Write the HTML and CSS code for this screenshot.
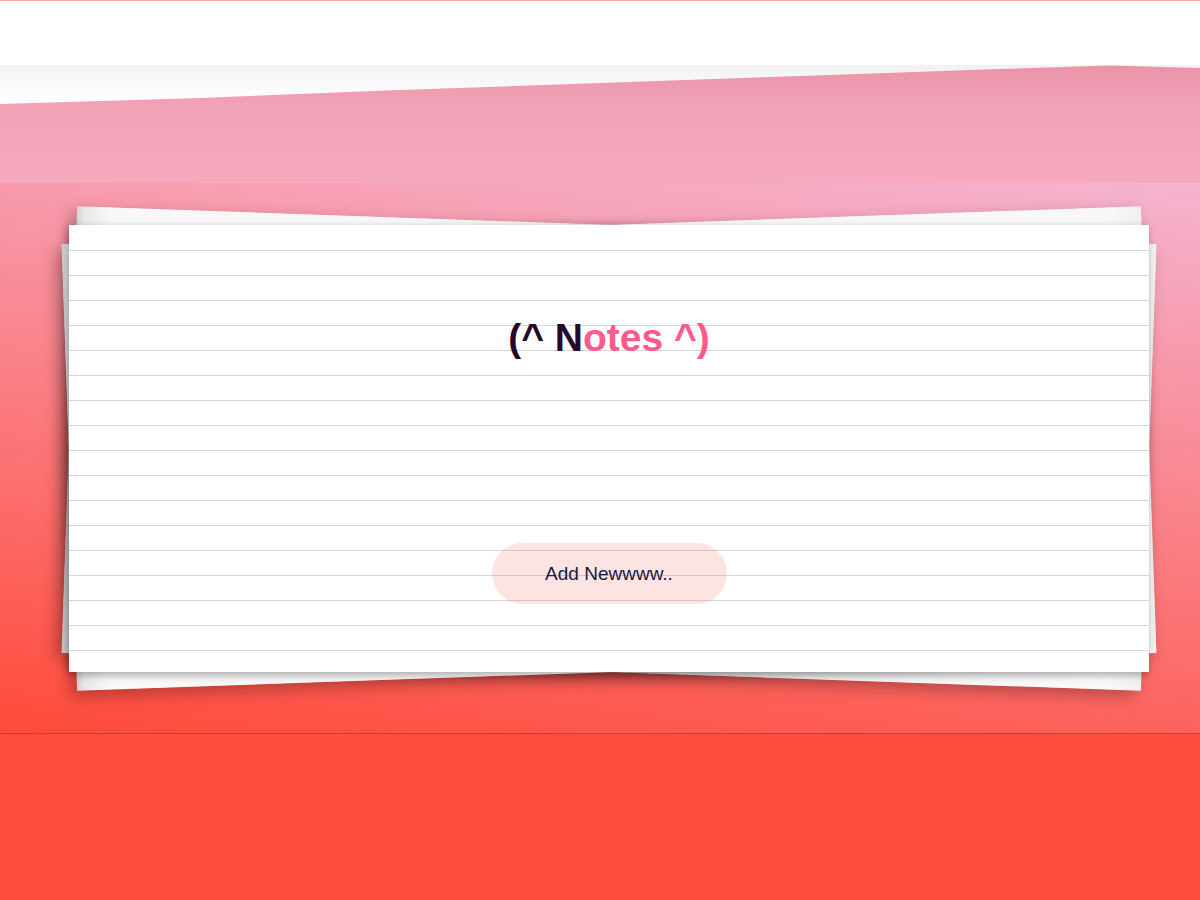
FILE: index.html
```html
<!DOCTYPE html>
<html>
<head>
<meta charset="utf-8">
<title>Notes</title>
<link rel="stylesheet" href="styles.css">
</head>
<body>
<header class="topbar"></header>
<section class="band"><div class="band-fill"></div></section>
<main class="stage">
  <div class="note">
    <h1 class="title"><span class="dark">(^ N</span><span class="pink">otes ^)</span></h1>
    <button class="add">Add Newwww..</button>
  </div>
</main>
<footer class="footer"></footer>
</body>
</html>
```
FILE: styles.css
```css
html, body {
  margin: 0;
  padding: 0;
}
body {
  width: 1200px;
  min-height: 900px;
  background: #ff4d3d;
  font-family: "Liberation Sans", Arial, sans-serif;
}
.topbar {
  height: 64px;
  border-top: 1px solid #ffa89e;
  background: #fff;
}
.band {
  height: 118px;
  background: linear-gradient(#f2f2f2, #ffffff 35px);
}
.band-fill {
  height: 100%;
  background: linear-gradient(to bottom, #eb93a7 0%, #f2a2b7 35%, #f6a8bd 100%);
  clip-path: polygon(0 39px, 16.7% 33px, 33.3% 25px, 66.7% 11px, 83.3% 4px, 92.5% 0.5px, 100% 3px, 100% 100%, 0 100%);
}
.stage {
  position: relative;
  z-index: 0;
  height: 550px;
  box-sizing: border-box;
  padding-top: 42px;
  background: linear-gradient(8deg, #ff4a3a 0%, #f5b4d0 100%);
}
.note {
  position: relative;
  width: 1080px;
  height: 447px;
  margin-left: 69px;
  box-sizing: border-box;
  padding-top: 90px;
  text-align: center;
  background: repeating-linear-gradient(to bottom, transparent 0, transparent 24px, #d6d6d6 24px, #d6d6d6 25px) 0 1px / 100% 100% no-repeat, #ffffff;
  box-shadow: -2px 3px 8px rgba(0, 0, 0, 0.32);
}
.note::before,
.note::after {
  content: "";
  position: absolute;
  left: 0;
  top: 0;
  right: 0;
  bottom: 0;
  z-index: -1;
  background: linear-gradient(to right, #d2d2d2 0%, #e8e8e8 0.7%, #f8f8f8 3%, #f8f8f8 97%, #f0f0f0 100%);
  box-shadow: -6px 6px 16px rgba(0, 0, 0, 0.28);
}
.note::before {
  transform: rotate(2deg);
}
.note::after {
  transform: rotate(-2deg);
}
.title {
  margin: 0;
  font-size: 39px;
  line-height: 45px;
  font-weight: bold;
}
.dark {
  color: #27082a;
}
.pink {
  color: #ff5a8c;
}
.add {
  display: block;
  margin: 183px auto 0;
  width: 235px;
  height: 61px;
  border: none;
  border-radius: 31px;
  background: rgba(238, 112, 102, 0.19);
  color: #1a1a3e;
  font-family: "Liberation Sans", Arial, sans-serif;
  font-size: 19px;
  padding: 0;
}
.footer {
  height: 166px;
  border-top: 1px solid rgba(160, 50, 40, 0.55);
  background: #ff4d3d;
}
```
